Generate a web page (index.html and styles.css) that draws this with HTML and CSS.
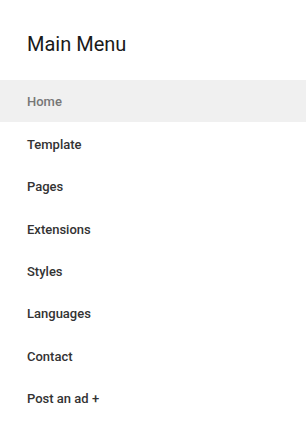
FILE: index.html
```html
<!DOCTYPE html>
<html>
<head>
<meta charset="utf-8">
<link rel="stylesheet" href="styles.css">
</head>
<body>
<div class="panel">
  <h2 class="title">Main Menu</h2>
  <ul class="menu">
    <li class="item active"><a href="#">Home</a></li>
    <li class="item"><a href="#">Template</a></li>
    <li class="item"><a href="#">Pages</a></li>
    <li class="item"><a href="#">Extensions</a></li>
    <li class="item"><a href="#">Styles</a></li>
    <li class="item"><a href="#">Languages</a></li>
    <li class="item"><a href="#">Contact</a></li>
    <li class="item"><a href="#">Post an ad +</a></li>
  </ul>
</div>
</body>
</html>
```
FILE: styles.css
```css
html, body {
  margin: 0;
  padding: 0;
  background: #fff;
}
body {
  font-family: Roboto, "Liberation Sans", sans-serif;
  width: 306px;
  height: 439px;
  overflow: hidden;
}
.panel {
  display: flex;
  flex-direction: column;
}
.title {
  margin: 0;
  padding: 31px 27px 0;
  height: 80px;
  box-sizing: border-box;
  font-size: 20px;
  font-weight: 400;
  line-height: 26px;
  color: #1a1a1a;
}
.menu {
  list-style: none;
  margin: 0;
  padding: 0;
}
.item {
  height: 42.45px;
  box-sizing: border-box;
  padding-top: 2px;
  display: flex;
  align-items: center;
}
.item a {
  padding-left: 27px;
  font-size: 13px;
  font-weight: 500;
  color: #333;
  text-decoration: none;
  line-height: 16px;
}
.item.active {
  background: #f0f0f0;
}
.item.active a {
  color: #777;
}
```
